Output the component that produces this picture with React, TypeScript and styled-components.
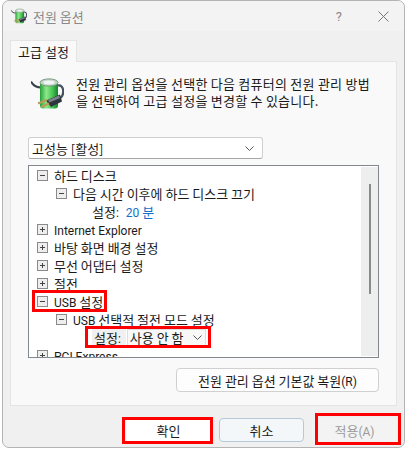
import React from "react";
import styled, { createGlobalStyle } from "styled-components";

const GlobalStyle = createGlobalStyle`
  html, body {
    margin: 0;
    padding: 0;
    background: #ffffff;
    overflow: hidden;
  }
  body {
    font-family: "Noto Sans CJK KR", "Noto Sans", sans-serif;
    font-size: 13px;
    color: #1a1a1a;
  }
`;

const PowerIcon: React.FC<{ size: number }> = ({ size }) => (
  <svg width={size} height={size} viewBox="0 0 33 32">
    <defs>
      <linearGradient id="cell" x1="0" x2="1" y1="0" y2="0">
        <stop offset="0" stopColor="#27a03c" />
        <stop offset="0.35" stopColor="#8de88a" />
        <stop offset="0.7" stopColor="#45c452" />
        <stop offset="1" stopColor="#16802e" />
      </linearGradient>
    </defs>
    <path d="M0 4 C2 8 5 10 10 10" fill="none" stroke="#39424e" strokeWidth="2" />
    <rect x="9" y="4" width="18" height="27" rx="3" fill="url(#cell)" />
    <ellipse cx="18" cy="5" rx="9" ry="3.6" fill="#c4d6c8" stroke="#7b9a84" strokeWidth="1" />
    <ellipse cx="18" cy="5" rx="5.5" ry="1.9" fill="#f1f5f2" />
    <path d="M27 8 C33 7 34 17 29 21" fill="none" stroke="#46505e" strokeWidth="2.2" />
    <path d="M15 23 L29 17 L31 24 L20 29.5 Z" fill="#2f353d" />
    <path d="M17 22.5 L28 18 L29 20.5 L18.5 25 Z" fill="#79828d" />
    <path d="M7 26 L16 22.5 M10 29.5 L18 26" stroke="#b89c58" strokeWidth="2.2" />
  </svg>
);

const Chevron: React.FC = () => (
  <svg width="9" height="5" viewBox="0 0 9 5">
    <path d="M0.5 0.5 L4.5 4.5 L8.5 0.5" fill="none" stroke="#555555" strokeWidth="1" />
  </svg>
);

const Expander: React.FC<{ open?: boolean }> = ({ open }) => (
  <Box>
    <svg width="9" height="9" viewBox="0 0 9 9">
      <path d="M2 4.5 H7" stroke="#444444" strokeWidth="1" />
      {!open && <path d="M4.5 2 V7" stroke="#444444" strokeWidth="1" />}
    </svg>
  </Box>
);

const App: React.FC = () => {
  return (
    <>
      <GlobalStyle />
      <Page>
        <Dialog>
          <TitleBar>
            <TitleLeft>
              <PowerIcon size={16} />
              <Title>전원 옵션</Title>
            </TitleLeft>
            <TitleRight>
              <Help>?</Help>
              <svg width="11" height="11" viewBox="0 0 11 11">
                <path d="M0.5 0.5 L10.5 10.5 M10.5 0.5 L0.5 10.5" stroke="#777777" strokeWidth="1" />
              </svg>
            </TitleRight>
          </TitleBar>
          <Body>
            <Tab>고급 설정</Tab>
            <Panel>
              <Intro>
                <PowerIcon size={33} />
                <IntroText>
                  전원 관리 옵션을 선택한 다음 컴퓨터의 전원 관리 방법
                  <br />
                  을 선택하여 고급 설정을 변경할 수 있습니다.
                </IntroText>
              </Intro>
              <PlanSelect>
                <span>고성능 [활성]</span>
                <Chevron />
              </PlanSelect>
              <Tree>
                <TreeScroll>
                  <Row $level={0}>
                    <Expander open />
                    하드 디스크
                  </Row>
                  <Row $level={1}>
                    <Expander open />
                    다음 시간 이후에 하드 디스크 끄기
                  </Row>
                  <Row $level={2}>
                    <span>
                      설정<Latin>:</Latin>
                    </span>
                    <Value>
                      <Latin>20</Latin> 분
                    </Value>
                  </Row>
                  <Row $level={0}>
                    <Expander />
                    <span>
                      <Latin>Internet Explorer</Latin>
                    </span>
                  </Row>
                  <Row $level={0}>
                    <Expander />
                    바탕 화면 배경 설정
                  </Row>
                  <Row $level={0}>
                    <Expander />
                    무선 어댑터 설정
                  </Row>
                  <Row $level={0}>
                    <Expander />
                    절전
                  </Row>
                  <Row $level={0}>
                    <Marked $inset="-2px -4px -1px -6px">
                      <Expander open />
                      <span>
                        <Latin>USB</Latin> 설정
                      </span>
                    </Marked>
                  </Row>
                  <Row $level={1}>
                    <Expander open />
                    <span>
                      <Latin>USB</Latin> 선택적 절전 모드 설정
                    </span>
                  </Row>
                  <Row $level={2}>
                    <Marked $inset="-3px -5px -1px -7px">
                      <SettingLabel>
                        설정<Latin>:</Latin>
                      </SettingLabel>
                      <InlineSelect>
                        사용 안 함
                        <Chevron />
                      </InlineSelect>
                    </Marked>
                  </Row>
                  <Row $level={0}>
                    <Expander />
                    <span>
                      <Latin>PCI Express</Latin>
                    </span>
                  </Row>
                </TreeScroll>
                <ScrollTrack>
                  <ScrollThumb />
                </ScrollTrack>
              </Tree>
              <RestoreRow>
                <RestoreButton>
                  <span>
                    전원 관리 옵션 기본값 복원<Latin>(R)</Latin>
                  </span>
                </RestoreButton>
              </RestoreRow>
            </Panel>
            <Footer>
              <Marked $inset="-1px -2px -2px -4px">
                <FooterButton>확인</FooterButton>
              </Marked>
              <FooterButton $primary>취소</FooterButton>
              <Marked $inset="-5px -4px -3px 3px">
                <FooterButton $disabled>
                  <span>
                    적용<Latin>(A)</Latin>
                  </span>
                </FooterButton>
              </Marked>
            </Footer>
          </Body>
        </Dialog>
      </Page>
    </>
  );
};

export default App;

const Page = styled.div`
  width: 407px;
  height: 450px;
  padding: 0 2px 2px 2px;
  box-sizing: border-box;
`;
const Dialog = styled.div`
  height: 100%;
  box-sizing: border-box;
  border: 1px solid #b4b4b4;
  border-radius: 7px;
  background: #f0f0f0;
  display: flex;
  flex-direction: column;
`;
const TitleBar = styled.div`
  height: 30px;
  flex: none;
  background: #f3f3f3;
  border-radius: 7px 7px 0 0;
  display: flex;
  align-items: center;
  justify-content: space-between;
  padding: 0 15px 0 8px;
`;
const TitleLeft = styled.div`
  display: flex;
  align-items: center;
  gap: 6px;
`;
const Title = styled.div`
  color: #8a8a8a;
`;
const TitleRight = styled.div`
  display: flex;
  align-items: center;
  gap: 36px;
`;
const Help = styled.div`
  color: #888888;
  font-family: Roboto, sans-serif;
  font-size: 13px;
`;
const Body = styled.div`
  flex: 1;
  padding: 9px 7px 0 7px;
  display: flex;
  flex-direction: column;
`;
const Latin = styled.span`
  font-family: Roboto, sans-serif;
  font-size: 12px;
`;
const Tab = styled.div`
  width: 67px;
  height: 22px;
  box-sizing: border-box;
  background: #f9f9f9;
  border: 1px solid #e4e4e4;
  border-bottom: none;
  display: flex;
  align-items: center;
  justify-content: center;
  position: relative;
  z-index: 1;
  margin-bottom: -1px;
`;
const Panel = styled.div`
  height: 345px;
  box-sizing: border-box;
  background: #f9f9f9;
  border: 1px solid #e4e4e4;
  padding: 15px 17px 0 17px;
  display: flex;
  flex-direction: column;
`;
const Intro = styled.div`
  display: flex;
  gap: 12px;
  padding-left: 3px;
  height: 60px;
`;
const IntroText = styled.div`
  line-height: 17px;
  letter-spacing: 0.25px;
  white-space: nowrap;
  margin-top: -2px;
`;
const PlanSelect = styled.div`
  width: 235px;
  height: 22px;
  box-sizing: border-box;
  background: #ffffff;
  border: 1px solid #d0d0d0;
  border-bottom-color: #a8a8a8;
  border-radius: 3px;
  display: flex;
  align-items: center;
  justify-content: space-between;
  padding: 0 8px 0 3px;
`;
const Tree = styled.div`
  margin-top: 6px;
  width: 351px;
  height: 193px;
  box-sizing: border-box;
  background: #ffffff;
  border: 1px solid #828790;
  display: flex;
`;
const TreeScroll = styled.div`
  flex: 1;
  min-width: 0;
  height: 191px;
  overflow: hidden;
`;
const Row = styled.div<{ $level: number }>`
  height: 18.1px;
  display: flex;
  align-items: center;
  gap: 7px;
  white-space: pre;
  padding-left: ${(p) => [9, 28, 63][p.$level]}px;
`;
const Box = styled.span`
  width: 9px;
  height: 9px;
  outline: 1px solid #8a8a8a;
  background: #eeeeee;
  display: flex;
  flex: none;
`;
const Marked = styled.div<{ $inset: string }>`
  position: relative;
  display: flex;
  align-items: center;
  gap: 7px;

  &::after {
    content: "";
    position: absolute;
    inset: ${(p) => p.$inset};
    border: 3px solid #ff0000;
    pointer-events: none;
  }
`;
const Value = styled.span`
  color: #1170c8;
`;
const SettingLabel = styled.span`
  background: #f0f0f0;
  height: 18px;
  line-height: 18px;
  padding: 0 5px 0 2px;
  margin-right: -6px;
`;
const InlineSelect = styled.div`
  width: 79px;
  height: 18px;
  box-sizing: border-box;
  background: #f8f8f8;
  border: 1px solid #dddddd;
  display: flex;
  align-items: center;
  justify-content: space-between;
  padding: 0 3px 0 2px;
`;
const ScrollTrack = styled.div`
  width: 17px;
  flex: none;
  margin: 1px 0 1px 0;
  background: #eeeeee;
  display: flex;
  justify-content: center;
  padding-top: 17px;
  box-sizing: border-box;
`;
const ScrollThumb = styled.div`
  width: 2px;
  height: 110px;
  background: #8a8a8a;
`;
const RestoreRow = styled.div`
  margin-top: 10px;
  width: 351px;
  display: flex;
  justify-content: flex-end;
`;
const RestoreButton = styled.div`
  width: 203px;
  height: 24px;
  box-sizing: border-box;
  background: #fdfdfd;
  border: 1px solid #d0d0d0;
  border-radius: 4px;
  display: flex;
  align-items: center;
  justify-content: center;
`;
const Footer = styled.div`
  display: flex;
  justify-content: flex-end;
  gap: 8px;
  padding-top: 12px;
`;
const FooterButton = styled.div<{ $primary?: boolean; $disabled?: boolean }>`
  width: 85px;
  height: 24px;
  box-sizing: border-box;
  border-radius: 4px;
  border: ${(p) => (p.$primary ? "1px solid #b5c9da" : "none")};
  background: ${(p) => (p.$disabled ? "#f3f3f3" : p.$primary ? "#f3f7fa" : "#ffffff")};
  color: ${(p) => (p.$disabled ? "#9a9a9a" : "#1a1a1a")};
  display: flex;
  align-items: center;
  justify-content: center;
`;
